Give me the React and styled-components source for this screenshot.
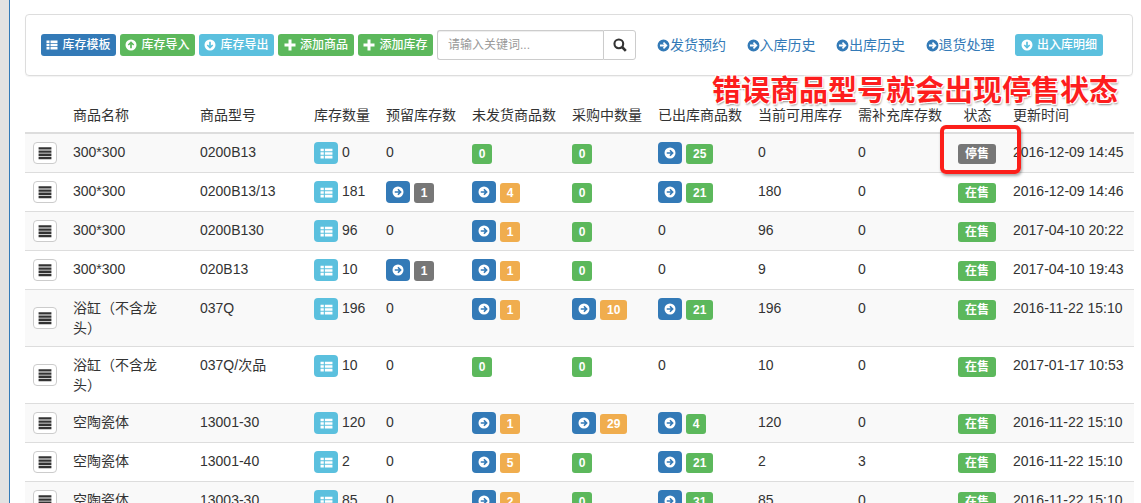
import React from "react";
import styled, { createGlobalStyle } from "styled-components";

const GlobalStyle = createGlobalStyle`
  html, body {
    margin: 0;
    padding: 0;
    background: #fff;
    overflow: hidden;
  }
  body {
    font-family: "Liberation Sans", "Noto Sans CJK SC", sans-serif;
    font-size: 14px;
    line-height: 20px;
    color: #333;
  }
`;

const blue = "#337ab7";
const green = "#5cb85c";
const cyan = "#5bc0de";
const orange = "#f0ad4e";
const grey = "#777";

const Page = styled.div`
  position: relative;
  display: flex;
  height: 503px;
  overflow: hidden;
`;

const Rail = styled.div`
  flex: none;
  width: 9px;
  background: #e2e2e2;
  border-right: 1px solid ${blue};
`;

const Main = styled.div`
  flex: none;
  width: 1109px;
  padding: 14px 0 0 15px;
`;

const Panel = styled.div`
  display: flex;
  align-items: center;
  box-sizing: border-box;
  height: 62px;
  width: 1108px;
  padding: 0 15px;
  border: 1px solid #ddd;
  border-radius: 4px;
  box-shadow: 0 1px 1px rgba(0, 0, 0, 0.05);
`;

const Button = styled.a`
  display: inline-flex;
  align-items: center;
  justify-content: center;
  gap: 4px;
  box-sizing: border-box;
  height: 22px;
  width: ${(p) => p.$width || 75}px;
  flex: none;
  margin-right: 4px;
  border-radius: 3px;
  background: ${(p) => p.$color};
  color: #fff;
  font-size: 12px;
  font-weight: 500;
  line-height: 18px;
  white-space: nowrap;
`;

const SearchGroup = styled.div`
  display: flex;
  flex: none;
  height: 30px;
  margin-right: 21px;
`;

const SearchInput = styled.input`
  box-sizing: border-box;
  width: 166px;
  height: 30px;
  padding: 0 10px;
  border: 1px solid #ccc;
  border-right: 0;
  border-radius: 3px 0 0 3px;
  font-family: inherit;
  font-size: 12px;
  color: #555;
  box-shadow: inset 0 1px 1px rgba(0, 0, 0, 0.075);
  &::placeholder {
    color: #999;
  }
`;

const SearchButton = styled.button`
  display: flex;
  align-items: center;
  justify-content: center;
  width: 33px;
  height: 30px;
  padding: 0;
  background: #fff;
  color: #333;
  border: 1px solid #ccc;
  border-radius: 0 3px 3px 0;
`;

const NavLink = styled.a`
  display: inline-flex;
  align-items: center;
  flex: none;
  width: 70px;
  margin-right: 19.5px;
  color: ${blue};
  font-size: 14px;
  white-space: nowrap;
`;

const Note = styled.div`
  position: absolute;
  left: 712px;
  top: 72px;
  font-family: "Noto Sans CJK SC", sans-serif;
  font-size: 29px;
  font-weight: 700;
  line-height: 32px;
  color: #fd1d1d;
  white-space: nowrap;
  text-shadow: 1px 1px 0 #fff, -1px -1px 0 #fff, 1px -1px 0 #fff, -1px 1px 0 #fff,
    1px 2px 2px rgba(0, 0, 0, 0.45);
`;

const Highlight = styled.div`
  position: absolute;
  left: 940px;
  top: 125px;
  width: 81px;
  height: 49px;
  box-sizing: border-box;
  border: 4px solid #fc1f1a;
  border-radius: 6px;
  box-shadow: 1px 2px 3px rgba(0, 0, 0, 0.35);
`;

const Table = styled.table`
  table-layout: fixed;
  width: 1109px;
  margin-top: 24px;
  border-collapse: collapse;
  border-spacing: 0;
`;

const Th = styled.th`
  height: 32px;
  box-sizing: border-box;
  padding: 5px 8px 7px;
  border-bottom: 2px solid #ddd;
  font-weight: 400;
  color: #333;
  text-align: ${(p) => (p.$center ? "center" : "left")};
  white-space: nowrap;
`;

const Row = styled.tr`
  background: ${(p) => (p.$odd ? "#f9f9f9" : "#fff")};
`;

const Td = styled.td`
  padding: 8px;
  border-bottom: 1px solid #ddd;
  vertical-align: top;
  white-space: nowrap;
`;

const NameText = styled.div`
  max-width: 96px;
  white-space: normal;
`;

const Cell = styled.div`
  display: flex;
  align-items: flex-end;
  justify-content: ${(p) => (p.$center ? "center" : "flex-start")};
  gap: 4px;
  height: 22px;
`;

const Plain = styled.span`
  align-self: flex-start;
  line-height: 20px;
`;

const IconButton = styled.span`
  display: inline-flex;
  align-items: center;
  justify-content: center;
  box-sizing: border-box;
  width: 24px;
  height: 22px;
  flex: none;
  border-radius: 4px;
  background: ${(p) => p.$color};
  color: #fff;
`;

const MenuButton = styled.span`
  display: flex;
  align-items: center;
  justify-content: center;
  box-sizing: border-box;
  width: 24px;
  height: 22px;
  background: #fff;
  color: #333;
  border: 1px solid #ccc;
  border-radius: 4px;
  margin-top: ${(p) => (p.$tall ? 9 : 0)}px;
`;

const Label = styled.span`
  display: inline-flex;
  align-items: center;
  justify-content: center;
  box-sizing: border-box;
  height: 20px;
  min-width: 20px;
  padding: 0 ${(p) => (p.$wide ? 7 : 5)}px;
  border-radius: 3px;
  background: ${(p) => p.$color};
  color: #fff;
  font-size: 12px;
  font-weight: 700;
`;

const StatusLabel = styled(Label)`
  width: 38px;
  padding: 0;
  margin-right: 1px;
`;

const Glyph = styled.svg`
  display: block;
  flex: none;
  fill: currentColor;
  transform: rotate(${(p) => p.$turn || 0}deg);
`;

const ListIcon = ({ size = 12 }) => (
  <Glyph width={size} height={size} viewBox="0 0 24 24">
    <path d="M1 3h6v5H1zM9 3h14v5H9zM1 9.5h6v5H1zM9 9.5h14v5H9zM1 16h6v5H1zM9 16h14v5H9z" />
  </Glyph>
);

const CircleArrow = ({ size = 12, turn }) => (
  <Glyph width={size} height={size} viewBox="0 0 24 24" $turn={turn}>
    <path
      fillRule="evenodd"
      d="M12 1a11 11 0 1 0 0 22 11 11 0 0 0 0-22zM13 5.5l6.5 6.5-6.5 6.5-2.2-2.2 2.6-2.6H5.5v-3.4h7.9l-2.6-2.6z"
    />
  </Glyph>
);

const PlusIcon = () => (
  <Glyph width={12} height={12} viewBox="0 0 24 24">
    <path d="M9 1h6v8h8v6h-8v8H9v-8H1V9h8z" />
  </Glyph>
);

const SearchIcon = () => (
  <svg width="14" height="14" viewBox="0 0 24 24" fill="none" stroke="currentColor" strokeWidth="3.6">
    <circle cx="10" cy="10" r="7.5" />
    <path d="M15.5 15.5 22 22" strokeWidth="4.5" />
  </svg>
);

const MenuIcon = () => (
  <Glyph width={14} height={14} viewBox="0 0 24 24">
    <path d="M1 2h22v4H1zM1 7.5h22v4H1zM1 13h22v4H1zM1 18.5h22v4H1z" />
  </Glyph>
);

const Count = ({ arrow, n, color }) => (
  <Cell>
    {arrow && (
      <IconButton $color={blue}>
        <CircleArrow />
      </IconButton>
    )}
    <Label $color={color} $wide={n > 9}>
      {n}
    </Label>
  </Cell>
);

const Value = ({ v }) => (v === 0 ? <Plain>0</Plain> : v);

const columns = [40, 127, 114, 72, 86, 100, 86, 100, 100, 100, 55, 129];

const headers = [
  "",
  "商品名称",
  "商品型号",
  "库存数量",
  "预留库存数",
  "未发货商品数",
  "采购中数量",
  "已出库商品数",
  "当前可用库存",
  "需补充库存数",
  "状态",
  "更新时间",
];

const g0 = <Count n={0} color={green} />;
const res1 = <Count arrow n={1} color={grey} />;
const ora = (n) => <Count arrow n={n} color={orange} />;
const gre = (n) => <Count arrow n={n} color={green} />;

const rows = [
  { name: "300*300", model: "0200B13", stock: 0, res: 0, unsent: g0, buying: g0, out: gre(25), avail: 0, need: 0, off: true, time: "2016-12-09 14:45" },
  { name: "300*300", model: "0200B13/13", stock: 181, res: res1, unsent: ora(4), buying: g0, out: gre(21), avail: 180, need: 0, time: "2016-12-09 14:46" },
  { name: "300*300", model: "0200B130", stock: 96, res: 0, unsent: ora(1), buying: g0, out: 0, avail: 96, need: 0, time: "2017-04-10 20:22" },
  { name: "300*300", model: "020B13", stock: 10, res: res1, unsent: ora(1), buying: g0, out: 0, avail: 9, need: 0, time: "2017-04-10 19:43" },
  { name: "浴缸（不含龙头）", model: "037Q", stock: 196, res: 0, unsent: ora(1), buying: ora(10), out: gre(21), avail: 196, need: 0, time: "2016-11-22 15:10", tall: true },
  { name: "浴缸（不含龙头）", model: "037Q/次品", stock: 10, res: 0, unsent: g0, buying: g0, out: 0, avail: 10, need: 0, time: "2017-01-17 10:53", tall: true },
  { name: "空陶瓷体", model: "13001-30", stock: 120, res: 0, unsent: ora(1), buying: ora(29), out: gre(4), avail: 120, need: 0, time: "2016-11-22 15:10" },
  { name: "空陶瓷体", model: "13001-40", stock: 2, res: 0, unsent: ora(5), buying: g0, out: gre(21), avail: 2, need: 3, time: "2016-11-22 15:10" },
  { name: "空陶瓷体", model: "13003-30", stock: 85, res: 0, unsent: ora(2), buying: g0, out: gre(31), avail: 85, need: 0, time: "2016-11-22 15:10" },
];

const App = () => (
  <Page>
    <GlobalStyle />
    <Rail />
    <Main>
      <Panel>
        <Button $color={blue}>
          <ListIcon />
          库存模板
        </Button>
        <Button $color={green}>
          <CircleArrow turn={-90} />
          库存导入
        </Button>
        <Button $color={cyan}>
          <CircleArrow turn={90} />
          库存导出
        </Button>
        <Button $color={green} $width={76}>
          <PlusIcon />
          添加商品
        </Button>
        <Button $color={green}>
          <PlusIcon />
          添加库存
        </Button>
        <SearchGroup>
          <SearchInput placeholder="请输入关键词..." />
          <SearchButton>
            <SearchIcon />
          </SearchButton>
        </SearchGroup>
        <NavLink>
          <CircleArrow size={13} />
          发货预约
        </NavLink>
        <NavLink>
          <CircleArrow size={13} />
          入库历史
        </NavLink>
        <NavLink>
          <CircleArrow size={13} />
          出库历史
        </NavLink>
        <NavLink>
          <CircleArrow size={13} />
          退货处理
        </NavLink>
        <Button $color={cyan} $width={88}>
          <CircleArrow turn={90} />
          出入库明细
        </Button>
      </Panel>
      <Table>
        <colgroup>
          {columns.map((w, i) => (
            <col key={i} width={w} />
          ))}
        </colgroup>
        <thead>
          <tr>
            {headers.map((h, i) => (
              <Th key={i} $center={h === "状态"}>
                {h}
              </Th>
            ))}
          </tr>
        </thead>
        <tbody>
          {rows.map((r, i) => (
            <Row key={i} $odd={i % 2 === 0}>
              <Td>
                <MenuButton $tall={r.tall}>
                  <MenuIcon />
                </MenuButton>
              </Td>
              <Td>
                <NameText>{r.name}</NameText>
              </Td>
              <Td>{r.model}</Td>
              <Td>
                <Cell>
                  <IconButton $color={cyan}>
                    <ListIcon size={13} />
                  </IconButton>
                  <Plain>{r.stock}</Plain>
                </Cell>
              </Td>
              <Td>
                <Value v={r.res} />
              </Td>
              <Td>{r.unsent}</Td>
              <Td>{r.buying}</Td>
              <Td>
                <Value v={r.out} />
              </Td>
              <Td>{r.avail}</Td>
              <Td>{r.need}</Td>
              <Td>
                <Cell $center>
                  <StatusLabel $color={r.off ? grey : green}>{r.off ? "停售" : "在售"}</StatusLabel>
                </Cell>
              </Td>
              <Td>{r.time}</Td>
            </Row>
          ))}
        </tbody>
      </Table>
    </Main>
    <Note>错误商品型号就会出现停售状态</Note>
    <Highlight />
  </Page>
);

export default App;
